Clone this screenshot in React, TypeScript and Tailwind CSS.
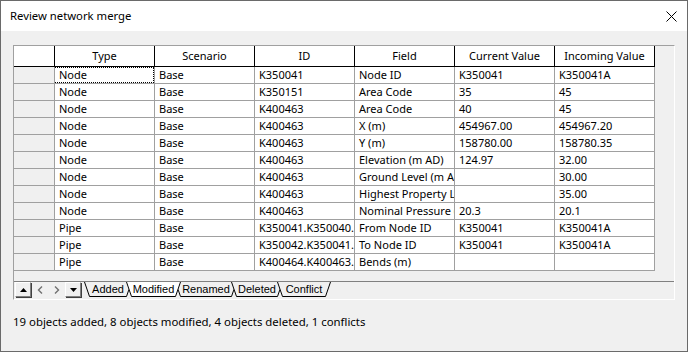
import React from 'react';

const columns = ['Type', 'Scenario', 'ID', 'Field', 'Current Value', 'Incoming Value'];

const rows: string[][] = [
  ['Node', 'Base', 'K350041', 'Node ID', 'K350041', 'K350041A'],
  ['Node', 'Base', 'K350151', 'Area Code', '35', '45'],
  ['Node', 'Base', 'K400463', 'Area Code', '40', '45'],
  ['Node', 'Base', 'K400463', 'X (m)', '454967.00', '454967.20'],
  ['Node', 'Base', 'K400463', 'Y (m)', '158780.00', '158780.35'],
  ['Node', 'Base', 'K400463', 'Elevation (m AD)', '124.97', '32.00'],
  ['Node', 'Base', 'K400463', 'Ground Level (m AD)', '', '30.00'],
  ['Node', 'Base', 'K400463', 'Highest Property Level (m AD)', '', '35.00'],
  ['Node', 'Base', 'K400463', 'Nominal Pressure (m)', '20.3', '20.1'],
  ['Pipe', 'Base', 'K350041.K350040.1', 'From Node ID', 'K350041', 'K350041A'],
  ['Pipe', 'Base', 'K350042.K350041.1', 'To Node ID', 'K350041', 'K350041A'],
  ['Pipe', 'Base', 'K400464.K400463.1', 'Bends (m)', '', ''],
];

const tabs = [
  { label: 'Added', w: 48 },
  { label: 'Modified', w: 55, active: true },
  { label: 'Renamed', w: 62 },
  { label: 'Deleted', w: 52 },
  { label: 'Conflict', w: 54 },
];

// sheet-style tab, slanted at both ends
const SheetTab: React.FC<{ label: string; w: number; active?: boolean; first?: boolean }> = ({ label, w, active, first }) => (
  <div
    className={`relative h-[15px] flex items-center justify-center shrink-0 ${first ? '' : '-ml-[6px]'} ${active ? 'z-10' : ''}`}
    style={{ width: w }}
  >
    <svg className="absolute inset-0" width={w} height={15}>
      <polygon points={`0,0 5,14.5 ${w - 5},14.5 ${w},0`} fill={active ? '#ffffff' : '#f0f0f0'} />
      <polyline
        points={`0.5,0 5.5,14.5 ${w - 5.5},14.5 ${w - 0.5},0`}
        fill="none"
        stroke="#000"
        strokeWidth={1}
      />
    </svg>
    <span className="relative text-[11px] leading-[13px] text-black font-['Liberation_Sans',Arial,sans-serif]">{label}</span>
  </div>
);

const ScrollButton: React.FC<{ down?: boolean }> = ({ down }) => (
  <div className="w-[16px] h-[15px] flex items-center justify-center bg-[#f0f0f0] border border-t-white border-l-white border-r-[#808080] border-b-[#808080] shadow-[1px_1px_0_#404040]">
    <svg width="7" height="4" viewBox="0 0 7 4">
      {down ? <polygon points="0,0 7,0 3.5,4" fill="#000" /> : <polygon points="0,4 7,4 3.5,0" fill="#000" />}
    </svg>
  </div>
);

export default function App() {
  return (
    <div className="w-[690px] h-[353px] bg-white font-['Noto_Sans',sans-serif] text-black">
      <div className="w-[688px] h-[352px] border border-[#6a6a6a] bg-[#f0f0f0] flex flex-col">
        {/* Title bar */}
        <div className="h-[30px] bg-white flex items-center justify-between pl-[9px] pr-[9px] shrink-0">
          <span className="text-[11.3px] leading-[16px]">Review network merge</span>
          <svg width="11" height="11" viewBox="0 0 11 11" className="mr-[1px]">
            <path d="M0.5 0.5 L10.5 10.5 M10.5 0.5 L0.5 10.5" stroke="#000" strokeWidth="1" />
          </svg>
        </div>

        <div className="pt-[14px] pl-[12px]">
          {/* Grid panel */}
          <div className="w-[662px] h-[255px] border border-t-[#a0a0a0] border-l-[#a0a0a0] border-r-white border-b-white flex flex-col">
            <div className="grid grid-cols-[41px_repeat(6,100px)] text-[11px]">
              <div className="h-[21px] bg-white border-r border-b border-black" />
              {columns.map((c) => (
                <div
                  key={c}
                  className="h-[21px] bg-white border-r border-b border-black flex items-center justify-center leading-[16px]"
                >
                  {c}
                </div>
              ))}
              {rows.map((r, i) => (
                <React.Fragment key={i}>
                  <div className="h-[17px] bg-[#f0f0f0] border-r border-b border-[#a0a0a0]" />
                  {r.map((v, j) => (
                    <div
                      key={j}
                      className="relative h-[17px] bg-white border-r border-b border-[#a0a0a0] pl-[4px] leading-[16px] whitespace-nowrap overflow-hidden"
                    >
                      {v}
                      {i === 0 && j === 0 && (
                        <div className="absolute -left-px top-0 right-0 bottom-0 border border-dotted border-black" />
                      )}
                    </div>
                  ))}
                </React.Fragment>
              ))}
            </div>

            <div className="flex-1" />

            {/* Sheet tabs */}
            <div className="h-[16px] border-t border-[#808080] flex items-start mb-[2px]">
              <div className="ml-[1px]">
                <ScrollButton />
              </div>
              <div className="w-[17px] h-[15px] flex items-center justify-center">
                <svg width="6" height="8" viewBox="0 0 6 8">
                  <polyline points="5,0.5 1.5,4 5,7.5" fill="none" stroke="#707070" strokeWidth="1.4" />
                </svg>
              </div>
              <div className="w-[17px] h-[15px] flex items-center justify-center">
                <svg width="6" height="8" viewBox="0 0 6 8">
                  <polyline points="1,0.5 4.5,4 1,7.5" fill="none" stroke="#707070" strokeWidth="1.4" />
                </svg>
              </div>
              <ScrollButton down />
              <div className="flex ml-[3px]">
                {tabs.map((t, i) => (
                  <SheetTab key={t.label} label={t.label} w={t.w} active={t.active} first={i === 0} />
                ))}
              </div>
            </div>
          </div>

          <div className="mt-[14px] text-[11.4px] leading-[16px]">
            19 objects added, 8 objects modified, 4 objects deleted, 1 conflicts
          </div>
        </div>
      </div>
    </div>
  );
}
